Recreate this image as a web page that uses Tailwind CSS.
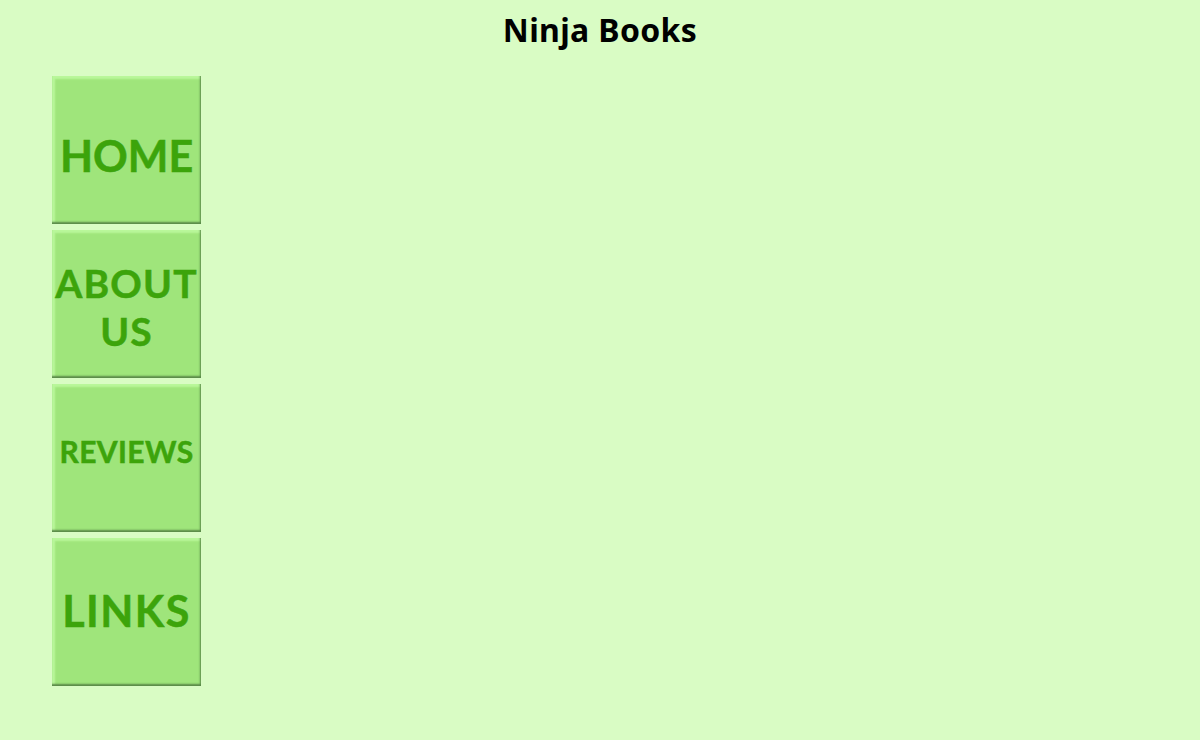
<!DOCTYPE html>
<html lang="en">
<head>
<meta charset="utf-8">
<title>Ninja Books</title>
<script src="https://cdn.jsdelivr.net/npm/@tailwindcss/browser@4"></script>
</head>
<body class="bg-[#d9fcc4] h-[740px] overflow-hidden font-['Noto_Sans',sans-serif]">
<h1 class="text-[32px] leading-[44px] font-bold text-black text-center pt-2 h-[76px] tracking-[0.35px]">Ninja Books</h1>
<nav class="flex flex-col gap-[6px] ml-[52px] w-[149px] font-['Lato',sans-serif] font-bold text-[#3ca40b] text-center [-webkit-text-stroke:0.5px_#3ca40b]">
  <a class="block h-[148px] bg-[#9fe57b] shadow-[inset_-1px_-2px_2px_#5a8a48,inset_3px_3px_2px_#b9f79a] pt-[55px] text-[43px] leading-[50px]">HOME</a>
  <a class="block h-[148px] bg-[#9fe57b] shadow-[inset_-1px_-2px_2px_#5a8a48,inset_3px_3px_2px_#b9f79a] pt-[29px] text-[39px] leading-[48px] tracking-[1.2px]">ABOUT<br>US</a>
  <a class="block h-[148px] bg-[#9fe57b] shadow-[inset_-1px_-2px_2px_#5a8a48,inset_3px_3px_2px_#b9f79a] pt-[47px] text-[30px] leading-[40px] tracking-[0.4px]">REVIEWS</a>
  <a class="block h-[148px] bg-[#9fe57b] shadow-[inset_-1px_-2px_2px_#5a8a48,inset_3px_3px_2px_#b9f79a] pt-[48px] text-[43px] leading-[50px] tracking-[1.4px]">LINKS</a>
</nav>
</body>
</html>
